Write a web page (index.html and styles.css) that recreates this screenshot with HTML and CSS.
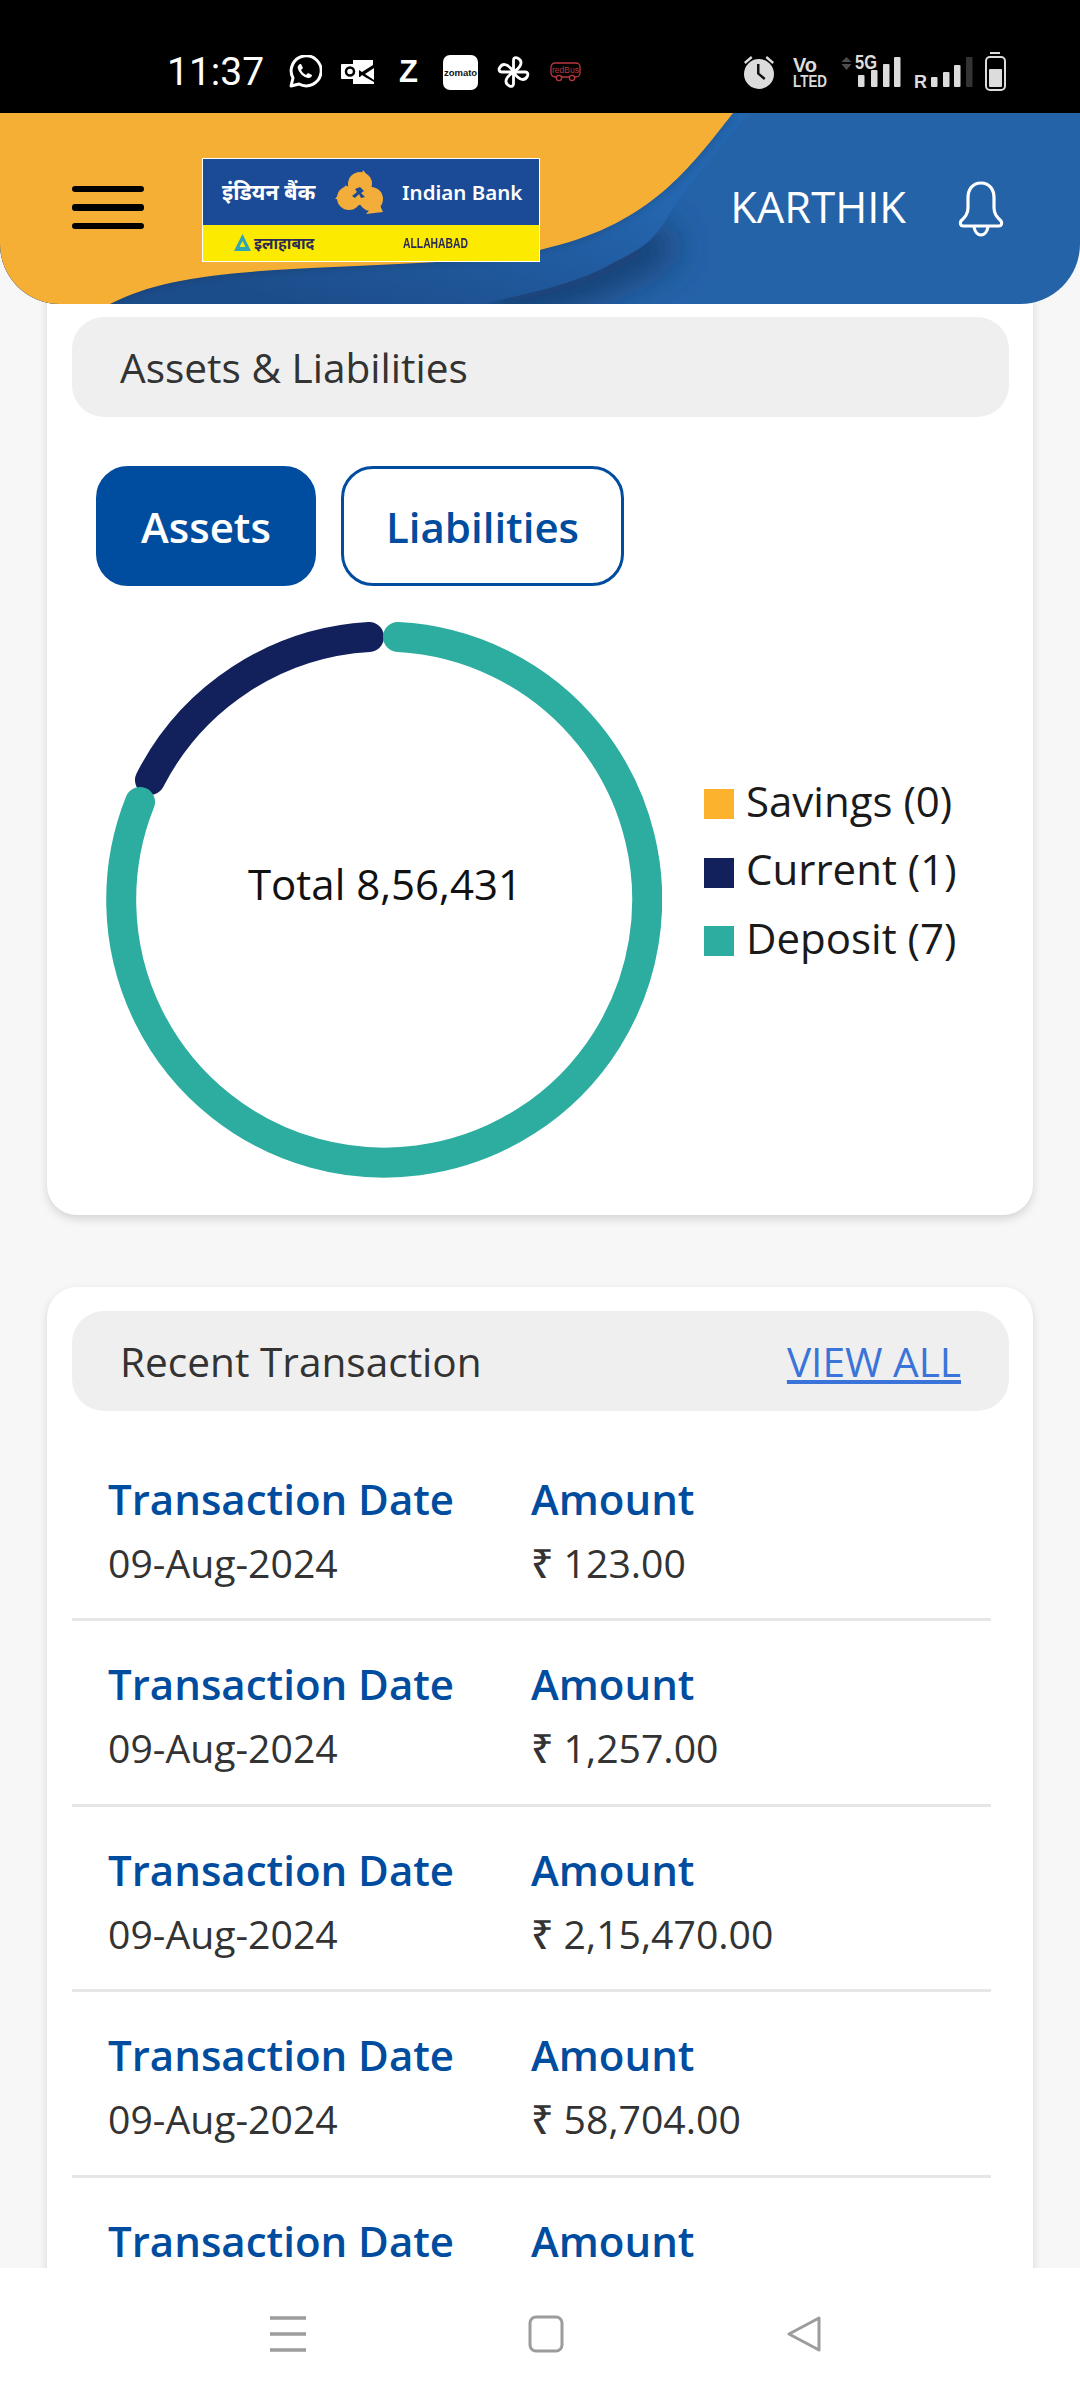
FILE: index.html
```html
<!DOCTYPE html>
<html lang="en">
<head>
  <meta charset="UTF-8" />
  <title>Indian Bank</title>
  <link rel="stylesheet" href="styles.css">
</head>
<body>
  <div class="status-bar">
    <span class="time">11:37</span>
    <svg class="st-whatsapp" width="34" height="34" viewBox="0 0 34 34">
      <path d="M3 31l2-8a15 15 0 1 1 6 6z" fill="none" stroke="#fff" stroke-width="3" stroke-linejoin="round"/>
      <path d="M12 9c-2 1-3 3-2 5 1.500 4 5 8 10 9 2 .3 4-1 4-3l-4-2-2 2c-2-1-4-3-5-5l2-2-2-4z" fill="#fff"/>
    </svg>
    <svg class="st-outlook" width="33" height="24" viewBox="0 0 33 24">
      <path d="M12 0h20v5L21 12 12 6zM12 17h7l2-2 3 2 9 5v2H12zM33 8v12l-9-6z" fill="#fff"/>
      <rect x="0" y="4" width="18" height="15" rx="1" fill="#fff"/>
      <circle cx="9" cy="11.500" r="4" fill="none" stroke="#000" stroke-width="2.500"/>
    </svg>
    <span class="st-z">Z</span>
    <span class="st-zomato">zomato</span>
    <svg class="st-wheel" width="33" height="32" viewBox="0 0 33 32">
      <g fill="none" stroke="#fff" stroke-width="2.800" stroke-linejoin="round">
        <path d="M16.500 16V4c0-2 2-3 4-2 6 3 4 9-4 14z"/>
        <path d="M16.500 16V4c0-2 2-3 4-2 6 3 4 9-4 14z" transform="rotate(90 16.500 16)"/>
        <path d="M16.500 16V4c0-2 2-3 4-2 6 3 4 9-4 14z" transform="rotate(180 16.500 16)"/>
        <path d="M16.500 16V4c0-2 2-3 4-2 6 3 4 9-4 14z" transform="rotate(270 16.500 16)"/>
      </g>
    </svg>
    <svg class="st-redbus" width="31" height="20" viewBox="0 0 31 20">
      <rect x="1" y="1" width="29" height="14" rx="4" fill="none" stroke="#b8383e" stroke-width="1.300"/>
      <circle cx="9" cy="16" r="2.600" fill="#000" stroke="#b8383e" stroke-width="1.300"/>
      <circle cx="22" cy="16" r="2.600" fill="#000" stroke="#b8383e" stroke-width="1.300"/>
      <text x="15.500" y="11" text-anchor="middle" class="redbus-txt">redBus</text>
    </svg>
    <svg class="st-right" width="270" height="44" viewBox="740 50 270 44">
      <g fill="#dcdcdc">
        <circle cx="759" cy="74" r="15"/>
        <path d="M744 62l7-6 1.500 2-7 6zM774 62l-7-6-1.500 2 7 6z"/>
        <path d="M757 64h2.500v9l6 5-1.500 2-7-6z" fill="#111"/>
        <text x="793" y="72" class="st-vo">Vo</text>
        <text x="793" y="87" class="st-lte" textLength="34" lengthAdjust="spacingAndGlyphs">LTED</text>
        <path d="M846.500 57l5 5h-10z" fill="#4c4c4c"/>
        <path d="M846.500 70l5-6h-10z" fill="#4c4c4c"/>
        <text x="855" y="69" class="st-5g" textLength="22" lengthAdjust="spacingAndGlyphs">5G</text>
        <rect x="858" y="75" width="6.500" height="12" rx="1"/>
        <rect x="871" y="70" width="6.500" height="17" rx="1"/>
        <rect x="883" y="64" width="6.500" height="23" rx="1"/>
        <rect x="894" y="57" width="6.500" height="30" rx="1"/>
        <text x="914" y="88" class="st-r">R</text>
        <rect x="931" y="77" width="6.500" height="10" rx="1"/>
        <rect x="943" y="72" width="6.500" height="15" rx="1"/>
        <rect x="954" y="65" width="6.500" height="22" rx="1"/>
        <rect x="966" y="57" width="6.500" height="30" rx="1" fill="#333"/>
        <rect x="990" y="52" width="10" height="2"/>
        <rect x="986" y="57" width="19" height="33" rx="4" fill="none" stroke="#dcdcdc" stroke-width="2"/>
        <rect x="989" y="69" width="13" height="18" rx="1"/>
      </g>
    </svg>
  </div>

  <header class="app-header">
    <svg class="header-art" width="1080" height="191" viewBox="0 0 1080 191">
      <defs>
        <linearGradient id="bandFill" x1="0" y1="1" x2="1" y2="0">
          <stop offset="0.2" stop-color="#1c4d8b"/>
          <stop offset="0.7" stop-color="#2466af"/>
        </linearGradient>
        <filter id="soft" x="-30%" y="-80%" width="160%" height="260%">
          <feGaussianBlur stdDeviation="20"/>
        </filter>
        <filter id="softSmall" x="-20%" y="-50%" width="140%" height="200%">
          <feGaussianBlur stdDeviation="5"/>
        </filter>
      </defs>
      <rect width="1080" height="191" fill="#2563a9"/>
      <path d="M665 120C650 135 640 135 600 157C560 175 520 182 482 191" fill="none" stroke="#183a6c" stroke-width="46" filter="url(#soft)"/>
      <path d="M749 0C715 40 690 70 670 100C650 135 640 135 600 157C560 175 520 182 482 191H0V0Z" fill="url(#bandFill)"/>
      <path d="M0 0H733C690 55 650 110 551 134C500 150 400 150 275 157C200 162 150 170 110 191H0Z" fill="#000" opacity=".2" filter="url(#softSmall)"/>
      <path d="M0 0H733C690 55 650 110 551 134C500 150 400 150 275 157C200 162 150 170 110 191H0Z" fill="#f5af35"/>
    </svg>
    <div class="hamburger"><span></span><span></span><span></span></div>
    <div class="logo">
      <div class="logo-top">
        <span class="logo-hi">इंडियन बैंक</span>
        <svg class="logo-emblem" width="50" height="44" viewBox="0 0 50 44">
          <g fill="#f3ad3b">
            <circle cx="25" cy="14" r="12"/>
            <circle cx="14" cy="28" r="12"/>
            <circle cx="36" cy="29" r="12"/>
            <circle cx="25" cy="23" r="12"/>
            <path d="M0 29l11-14 4 15zM28 0l9 11-13 2zM31 44l17-2-5-11z"/>
          </g>
          <path d="M25 17l4 4-3 2 4 4-4 1-2-4-4 4-3-2 5-4-2-3z" fill="#1b4a96"/>
        </svg>
        <span class="logo-en">Indian Bank</span>
      </div>
      <div class="logo-bottom">
        <svg class="logo-tri" width="17" height="17" viewBox="0 0 17 17">
          <path d="M8.500 0l8.500 17H0z" fill="#2ea6b5"/>
          <path d="M8.500 7l3 6h-6z" fill="#fcea00"/>
        </svg>
        <span class="logo-hi-small">इलाहाबाद</span>
        <span class="logo-en-small">ALLAHABAD</span>
      </div>
    </div>
    <span class="user-name">KARTHIK</span>
    <svg class="bell" width="46" height="56" viewBox="0 0 46 56">
      <path d="M23 2c-9 0-13 7-13 15v10c0 6-3 9-7 13-1.500 2-.5 5 2 5h36c2.500 0 3.500-3 2-5-4-4-7-7-7-13V17c0-8-4-15-13-15z" fill="none" stroke="#fff" stroke-width="3.200" stroke-linejoin="round"/>
      <path d="M16 46c1 5 4 8 7 8s6-3 7-8" fill="none" stroke="#fff" stroke-width="3.200"/>
    </svg>
  </header>

  <main class="content">
    <section class="card card-first">
      <div class="card-title"><span>Assets &amp; Liabilities</span></div>
      <div class="tabs">
        <button class="tab tab-active">Assets</button>
        <button class="tab">Liabilities</button>
      </div>
      <div class="chart-row">
        <svg class="donut" width="556" height="556" viewBox="0 0 556 556">
          <path d="M44 158A263 263 0 0 1 263 15" fill="none" stroke="#12215c" stroke-width="30" stroke-linecap="round"/>
          <path d="M292 15A263 263 0 1 1 34 180" fill="none" stroke="#2dada0" stroke-width="30" stroke-linecap="round"/>
          <text x="279" y="278" text-anchor="middle" class="donut-total">Total 8,56,431</text>
        </svg>
        <ul class="legend">
          <li><i class="swatch swatch-savings"></i><span>Savings (0)</span></li>
          <li><i class="swatch swatch-current"></i><span>Current (1)</span></li>
          <li><i class="swatch swatch-deposit"></i><span>Deposit (7)</span></li>
        </ul>
      </div>
    </section>

    <section class="card card-second">
      <div class="card-title">
        <span>Recent Transaction</span>
        <a class="view-all" href="#">VIEW ALL</a>
      </div>
      <div class="tx-list">
        <div class="tx-row">
          <div class="tx-col"><div class="tx-label">Transaction Date</div><div class="tx-value">09-Aug-2024</div></div>
          <div class="tx-col"><div class="tx-label">Amount</div><div class="tx-value">₹ 123.00</div></div>
        </div>
        <div class="tx-row">
          <div class="tx-col"><div class="tx-label">Transaction Date</div><div class="tx-value">09-Aug-2024</div></div>
          <div class="tx-col"><div class="tx-label">Amount</div><div class="tx-value">₹ 1,257.00</div></div>
        </div>
        <div class="tx-row">
          <div class="tx-col"><div class="tx-label">Transaction Date</div><div class="tx-value">09-Aug-2024</div></div>
          <div class="tx-col"><div class="tx-label">Amount</div><div class="tx-value">₹ 2,15,470.00</div></div>
        </div>
        <div class="tx-row">
          <div class="tx-col"><div class="tx-label">Transaction Date</div><div class="tx-value">09-Aug-2024</div></div>
          <div class="tx-col"><div class="tx-label">Amount</div><div class="tx-value">₹ 58,704.00</div></div>
        </div>
        <div class="tx-row">
          <div class="tx-col"><div class="tx-label">Transaction Date</div></div>
          <div class="tx-col"><div class="tx-label">Amount</div></div>
        </div>
      </div>
    </section>
  </main>

  <nav class="nav-bar">
    <svg width="36" height="36" viewBox="0 0 36 36">
      <path d="M0 2h36M0 18h36M0 34h36" stroke="#9c9c9c" stroke-width="3.400"/>
    </svg>
    <svg width="36" height="38" viewBox="0 0 36 38">
      <rect x="2" y="2" width="32" height="34" rx="6" fill="none" stroke="#9c9c9c" stroke-width="3"/>
    </svg>
    <svg width="36" height="36" viewBox="0 0 36 36">
      <path d="M33 2v32L3 18z" fill="none" stroke="#9c9c9c" stroke-width="3" stroke-linejoin="round"/>
    </svg>
  </nav>
</body>
</html>
```

FILE: styles.css
```css
html, body {
  margin: 0;
  height: 2400px;
  overflow: hidden;
}

body {
  position: relative;
  font-family: "Open Sans", "Noto Sans", sans-serif;
  background-color: #f7f7f7;
  color: #333;
}

/* status bar */
.status-bar {
  height: 113px;
  box-sizing: border-box;
  padding: 31px 70px 0 167px;
  background-color: #000;
  display: flex;
  align-items: center;
}

.time {
  font-family: Roboto, sans-serif;
  font-size: 39px;
  color: #fff;
  width: 97px;
}

.st-whatsapp { margin-left: 24px; }
.st-outlook { margin-left: 19px; }

.st-z {
  margin-left: 25px;
  width: 20px;
  font-family: "Liberation Sans", sans-serif;
  font-size: 31px;
  font-weight: bold;
  color: #fff;
}

.st-zomato {
  margin-left: 24px;
  width: 35px;
  height: 35px;
  border-radius: 7px;
  background-color: #fff;
  color: #111;
  font-family: "Liberation Sans", sans-serif;
  font-size: 9.5px;
  font-weight: bold;
  line-height: 35px;
  text-align: center;
}

.st-wheel { margin-left: 19px; }
.st-redbus { margin-left: 20px; }
.st-right { margin-left: auto; }

.redbus-txt {
  font-family: "Liberation Sans", sans-serif;
  font-size: 8.5px;
  fill: #b8383e;
}

.st-vo, .st-lte, .st-5g, .st-r {
  font-family: "Liberation Sans", sans-serif;
  font-weight: bold;
}

.st-vo { font-size: 20px; }
.st-lte { font-size: 16px; }
.st-5g { font-size: 20px; }
.st-r { font-size: 18px; }

/* header */
.app-header {
  position: relative;
  z-index: 2;
  height: 191px;
  overflow: hidden;
  border-radius: 0 0 60px 60px;
  display: flex;
  align-items: center;
  padding: 0 76px 0 72px;
  box-sizing: border-box;
}

.header-art {
  position: absolute;
  left: 0;
  top: 0;
}

.hamburger {
  position: relative;
  width: 72px;
  display: flex;
  flex-direction: column;
  gap: 12px;
  margin-top: -2px;
}

.hamburger span {
  height: 6.5px;
  border-radius: 3px;
  background-color: #000;
}

.logo {
  position: relative;
  width: 338px;
  height: 104px;
  margin: 2px 0 0 58px;
  box-sizing: border-box;
  border: 1.5px solid #fff;
  display: flex;
  flex-direction: column;
}

.logo-top {
  height: 66px;
  background-color: #1b4a96;
  color: #fff;
  display: flex;
  align-items: center;
  padding-left: 19px;
}

.logo-hi {
  width: 93px;
  font-size: 21.5px;
  font-weight: bold;
  white-space: nowrap;
}

.logo-emblem { margin-left: 20px; }

.logo-en {
  margin-left: 17px;
  font-family: "Noto Sans", sans-serif;
  font-size: 20.5px;
  font-weight: 600;
  white-space: nowrap;
}

.logo-bottom {
  flex: 1;
  background-color: #fcea00;
  color: #2b2b55;
  display: flex;
  align-items: center;
  padding-left: 31px;
}

.logo-hi-small {
  margin-left: 3px;
  width: 61px;
  font-size: 15.5px;
  font-weight: bold;
  white-space: nowrap;
}

.logo-en-small {
  margin-left: 88px;
  font-family: "Liberation Sans", sans-serif;
  font-size: 14px;
  font-weight: bold;
  white-space: nowrap;
  transform: scaleX(0.74);
  transform-origin: left center;
}

.user-name {
  position: relative;
  margin-left: auto;
  font-size: 43.5px;
  font-weight: 500;
  color: #fff;
  margin-top: -4px;
}

.bell {
  position: relative;
  margin-left: 52px;
  margin-top: 0;
}

/* cards */
.content {
  padding: 0 47px;
}

.card {
  background-color: #fff;
  border-radius: 30px;
  box-shadow: 0 4px 10px rgba(0, 0, 0, 0.14);
  padding: 0 24px 0 25px;
}

.card-first {
  margin-top: -30px;
  padding-top: 43px;
  padding-bottom: 37px;
}

.card-second {
  margin-top: 72px;
  padding-top: 24px;
  height: 1200px;
}

.card-title {
  height: 100px;
  box-sizing: border-box;
  padding: 0 48px;
  border-radius: 32px;
  background-color: #efefef;
  display: flex;
  align-items: center;
  justify-content: space-between;
  font-size: 40.6px;
  font-weight: 500;
  color: #333;
}

.view-all {
  color: #3b74d9;
}

.tabs {
  display: flex;
  gap: 25px;
  margin: 49px 0 0 24px;
}

.tab {
  height: 120px;
  padding: 0 42px;
  border: 3px solid #004c9e;
  border-radius: 32px;
  background-color: #fff;
  color: #004c9e;
  font-family: "Open Sans", sans-serif;
  font-size: 42px;
  font-weight: 600;
}

.tab-active {
  background-color: #004c9e;
  color: #fff;
}

.chart-row {
  display: flex;
  align-items: flex-start;
  margin: 36px 0 0 34px;
}

.donut {
  flex: none;
  display: block;
}

.donut-total {
  font-family: "Open Sans", sans-serif;
  font-size: 42px;
  fill: #111;
}

.legend {
  list-style: none;
  margin: 148px 0 0 42px;
  padding: 0;
  font-size: 42px;
  color: #1a1a1a;
}

.legend li {
  height: 68.5px;
  display: flex;
  align-items: center;
  gap: 12px;
  white-space: nowrap;
}

.legend span {
  margin-top: -8px;
}

.swatch {
  width: 30px;
  height: 30px;
}

.swatch-savings { background-color: #fdb22e; }
.swatch-current { background-color: #12215c; }
.swatch-deposit { background-color: #2dada0; }

/* transactions */
.tx-list {
  margin-top: 24.5px;
  margin-right: 18px;
}

.tx-row {
  display: flex;
  box-sizing: border-box;
  height: 185.5px;
  padding: 33px 0 0 36px;
  border-bottom: 3px solid #e6e6e6;
}

.tx-col:first-child {
  width: 423px;
}

.tx-label {
  height: 60px;
  line-height: 60px;
  margin-bottom: 2px;
  font-size: 42px;
  font-weight: 600;
  color: #004c9e;
}

.tx-value {
  height: 64px;
  line-height: 64px;
  font-size: 39.2px;
  font-weight: 500;
  color: #333;
}

/* system nav */
.nav-bar {
  position: absolute;
  left: 0;
  right: 0;
  bottom: 0;
  z-index: 3;
  height: 132px;
  background-color: #fff;
  display: flex;
  align-items: center;
  justify-content: center;
  gap: 222px;
  padding-left: 12px;
}
```
